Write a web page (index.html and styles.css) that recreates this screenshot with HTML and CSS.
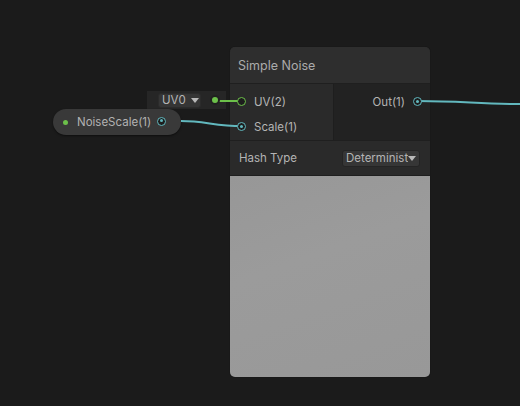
FILE: index.html
```html
<!DOCTYPE html>
<html>
<head>
<meta charset="utf-8">
<link rel="stylesheet" href="styles.css">
</head>
<body>
<div class="canvas">
  <svg class="wires" width="520" height="406" viewBox="0 0 520 406">
    <path d="M181 121 C 205 121, 215 126, 242 126" stroke="#62b8be" stroke-width="2" fill="none"/>
    <path d="M418 101 C 460 101, 480 104, 520 104" stroke="#62b8be" stroke-width="2" fill="none"/>
    <line x1="215" y1="101" x2="242" y2="101" stroke="#6cc04a" stroke-width="2"/>
  </svg>

  <div class="uv-panel">
    <div class="uv-drop"><span>UV0</span><span class="tri"></span></div>
    <span class="uv-dot"></span>
  </div>

  <div class="prop-node">
    <span class="green-dot"></span>
    <span class="prop-label">NoiseScale(1)</span>
    <span class="port port-teal filled"></span>
  </div>

  <div class="node">
    <div class="node-title">Simple Noise</div>
    <div class="node-ports">
      <div class="inputs">
        <div class="port-row"><span class="port port-green"></span><span>UV(2)</span></div>
        <div class="port-row"><span class="port port-teal filled"></span><span>Scale(1)</span></div>
      </div>
      <div class="outputs">
        <div class="port-row out"><span>Out(1)</span><span class="port port-teal filled"></span></div>
      </div>
    </div>
    <div class="node-control">
      <span>Hash Type</span>
      <div class="dropdown"><span class="dd-text">Deterministic</span><span class="tri"></span></div>
    </div>
    <div class="preview"></div>
  </div>
</div>
</body>
</html>
```
FILE: styles.css
```css
html, body {
  margin: 0;
  padding: 0;
  background: #1b1b1b;
}
body {
  font-family: Inter, "Noto Sans", "Liberation Sans", sans-serif;
  font-size: 11px;
  color: #b4b4b4;
}
.canvas {
  position: relative;
  width: 520px;
  height: 406px;
  overflow: hidden;
  background: #1b1b1b;
}
.wires {
  position: absolute;
  left: 0;
  top: 0;
  z-index: 3;
  pointer-events: none;
}
.uv-panel {
  position: absolute;
  left: 147px;
  top: 91px;
  width: 79px;
  height: 18px;
  background: #262626;
  display: flex;
  align-items: center;
  padding-left: 11px;
  box-sizing: border-box;
  gap: 9px;
}
.uv-drop {
  width: 43px;
  height: 15px;
  box-sizing: border-box;
  background: #353535;
  border: 1px solid #2b2b2b;
  border-radius: 3px;
  display: flex;
  align-items: center;
  padding-left: 3px;
  gap: 5px;
  font-size: 11.5px;
  color: #b4b4b4;
}
.tri {
  width: 0;
  height: 0;
  border-left: 4px solid transparent;
  border-right: 4px solid transparent;
  border-top: 5px solid #b8b8b8;
}
.uv-dot {
  width: 6px;
  height: 6px;
  border-radius: 50%;
  background: #6cc04a;
  border: 2px solid #202020;
  position: relative;
  z-index: 4;
}
.prop-node {
  position: absolute;
  left: 53px;
  top: 109px;
  width: 128px;
  height: 26px;
  box-sizing: border-box;
  background: #393939;
  border-radius: 13px;
  display: flex;
  align-items: center;
  padding-left: 10px;
  box-shadow: 0 1px 2px rgba(0,0,0,0.5);
}
.green-dot {
  width: 5px;
  height: 5px;
  border-radius: 50%;
  background: #6cc04a;
  margin-right: 9px;
}
.prop-label {
  font-size: 11.5px;
  color: #b2b2b2;
  flex: 1;
}
.prop-node .port {
  margin-right: 15px;
  margin-top: -2px;
}
.port {
  width: 9px;
  height: 9px;
  box-sizing: border-box;
  border-radius: 50%;
  display: inline-block;
  position: relative;
  z-index: 4;
  background: #1d1d1d;
  flex: none;
}
.port-green {
  border: 1.5px solid #6cc04a;
}
.port-teal {
  border: 1.5px solid #62b8be;
}
.port.filled::after {
  content: "";
  position: absolute;
  left: 1.5px;
  top: 1.5px;
  width: 3px;
  height: 3px;
  border-radius: 50%;
  background: #62b8be;
}
.node {
  position: absolute;
  left: 230px;
  top: 47px;
  width: 200px;
  height: 330px;
  background: #2a2a2a;
  border-radius: 5px;
  overflow: hidden;
  box-shadow: 0 0 0 1px #191919;
  display: flex;
  flex-direction: column;
}
.node-title {
  height: 37px;
  flex: none;
  box-sizing: border-box;
  background: #2e2e2e;
  border-bottom: 1px solid #1f1f1f;
  padding-left: 8px;
  display: flex;
  align-items: center;
  font-size: 12.5px;
  color: #ababab;
}
.node-ports {
  display: flex;
  height: 57px;
  flex: none;
  box-sizing: border-box;
  border-bottom: 1px solid #1f1f1f;
}
.inputs {
  width: 104px;
  background: #2a2a2a;
  border-right: 1px solid #1e1e1e;
  padding-top: 5px;
  box-sizing: border-box;
}
.outputs {
  flex: 1;
  background: #222222;
  padding-top: 5px;
  box-sizing: border-box;
}
.port-row {
  height: 25px;
  display: flex;
  align-items: center;
  gap: 8px;
  padding-left: 7px;
  font-size: 11.5px;
  color: #b4b4b4;
}
.port-row.out {
  justify-content: flex-end;
  padding-left: 0;
  padding-right: 8px;
  gap: 8px;
}
.node-control {
  height: 35px;
  flex: none;
  box-sizing: border-box;
  background: #2a2a2a;
  border-bottom: 1px solid #1f1f1f;
  display: flex;
  align-items: center;
  justify-content: space-between;
  padding-left: 9px;
  padding-right: 10px;
  font-size: 11.5px;
  color: #b4b4b4;
}
.dropdown {
  width: 78px;
  height: 17px;
  box-sizing: border-box;
  background: #363636;
  border: 1px solid #242424;
  border-radius: 3px;
  display: flex;
  align-items: center;
  padding-left: 3px;
  padding-right: 3px;
  gap: 0;
}
.dd-text {
  flex: 1;
  overflow: hidden;
  white-space: nowrap;
  font-size: 11.5px;
  color: #b4b4b4;
}
.preview {
  flex: 1;
  background: linear-gradient(160deg, #979797 0%, #9b9b9b 40%, #989898 100%);
}
```
